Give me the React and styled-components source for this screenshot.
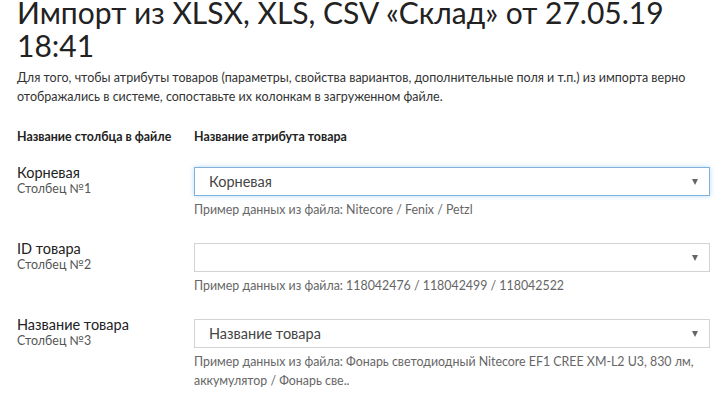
import styled, { createGlobalStyle } from 'styled-components';

const GlobalStyle = createGlobalStyle`
	body {
		margin: 0;
		background: #fff;
		font-family: Lato, 'Noto Sans', sans-serif;
		color: #222;
	}
`;

const rows = [
	{
		id: 1,
		name: 'Корневая',
		value: 'Корневая',
		focused: true,
		sample: 'Nitecore / Fenix / Petzl',
	},
	{
		id: 2,
		name: 'ID товара',
		value: '',
		sample: '118042476 / 118042499 / 118042522',
	},
	{
		id: 3,
		name: 'Название товара',
		value: 'Название товара',
		sample:
			'Фонарь светодиодный Nitecore EF1 CREE XM-L2 U3, 830 лм, аккумулятор / Фонарь све..',
	},
];

const App = () => {
	return (
		<>
			<GlobalStyle />
			<Page>
				<Title>Импорт из XLSX, XLS, CSV «Склад» от 27.05.19 18:41</Title>
				<Intro>
					Для того, чтобы атрибуты товаров (параметры, свойства вариантов,
					дополнительные поля и т.п.) из импорта верно отображались в системе,
					сопоставьте их колонкам в загруженном файле.
				</Intro>
				<Table>
					<HeadCell>Название столбца в файле</HeadCell>
					<HeadCell>Название атрибута товара</HeadCell>
					{rows.map((r) => (
						<Row key={r.id}>
							<Label>
								<span>{r.name}</span>
								<small>Столбец №{r.id}</small>
							</Label>
							<Field>
								<Select $focused={r.focused}>
									<span>{r.value}</span>
									<Arrow />
								</Select>
								<Hint>Пример данных из файла: {r.sample}</Hint>
							</Field>
						</Row>
					))}
				</Table>
			</Page>
		</>
	);
};

const Page = styled.section`
	padding: 0 12px 0 17px;
`;
const Title = styled.h1`
	margin: -4px 0 0;
	font-size: 30px;
	font-weight: 400;
	line-height: 33px;
	color: #222;
`;
const Intro = styled.p`
	margin: 6px 0 0;
	font-size: 12.5px;
	line-height: 19px;
	color: #333;
	max-width: 670px;
`;
const Table = styled.div`
	display: grid;
	grid-template-columns: 177px 1fr;
	margin-top: 23px;
`;
const HeadCell = styled.div`
	font-size: 12.4px;
	font-weight: 700;
	color: #222;
	line-height: 16px;
	margin-bottom: 22px;
`;
const Row = styled.div`
	display: contents;
`;
const Label = styled.div`
	display: flex;
	flex-direction: column;
	margin-top: -3px;
	span {
		font-size: 14.5px;
		line-height: 17px;
		color: #222;
	}
	small {
		font-size: 12.4px;
		line-height: 16px;
		color: #555;
	}
`;
const Field = styled.div`
	display: flex;
	flex-direction: column;
	margin-bottom: 24px;
`;
const Select = styled.div`
	height: 29px;
	box-sizing: border-box;
	display: flex;
	align-items: center;
	justify-content: space-between;
	padding: 0 11px 0 14px;
	border: 1px solid ${(p) => (p.$focused ? '#7fb1dc' : '#d3d3d3')};
	box-shadow: ${(p) => (p.$focused ? '0 0 5px rgba(102, 175, 233, 0.45)' : 'none')};
	font-size: 14.5px;
	color: #444;
`;
const Arrow = styled.i`
	width: 0;
	height: 0;
	border-left: 3px solid transparent;
	border-right: 3px solid transparent;
	border-top: 6px solid #666;
`;
const Hint = styled.div`
	margin-top: 4px;
	font-size: 12.4px;
	line-height: 19px;
	color: #666;
`;

export default App;
